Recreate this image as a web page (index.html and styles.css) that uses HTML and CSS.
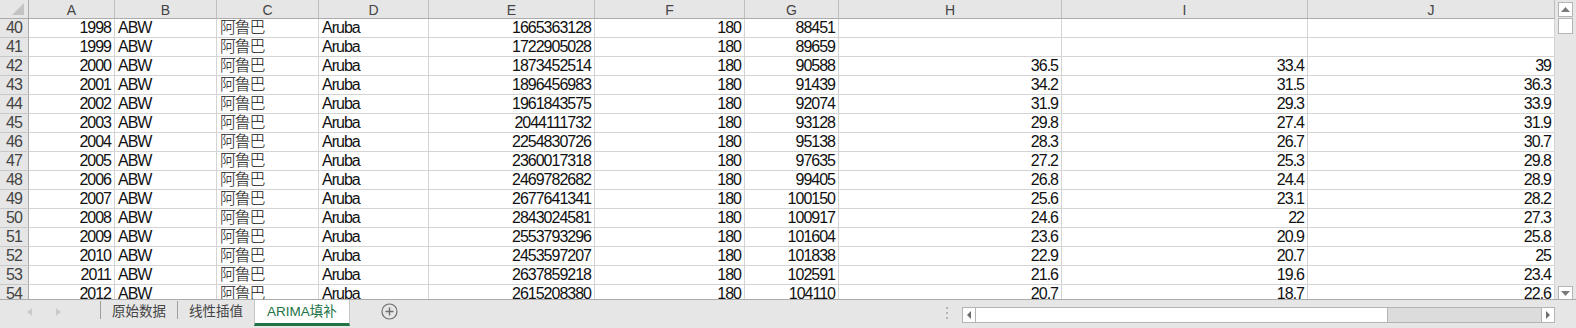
FILE: index.html
```html
<!DOCTYPE html>
<html lang="zh-CN">
<head>
    <meta charset="UTF-8">
    <title>ARIMA填补</title>
    <link rel="stylesheet" href="styles.css">
</head>
<body>
    <div class="app">
        <!-- Sheet grid + vertical scrollbar -->
        <div class="sheet-area">
            <div class="grid" id="grid">
                <div class="cell corner">
                    <svg width="13" height="13" viewBox="0 0 13 13"><polygon points="12,0 12,12 0,12" fill="#c3c3c3"/></svg>
                </div>
            </div>
            <div class="vscroll">
                <div class="sbtn"><svg width="9" height="5" viewBox="0 0 9 5"><polygon points="4.5,0 9,5 0,5" fill="#7a7a7a"/></svg></div>
                <div class="vthumb"></div>
                <div class="sbtn down"><svg width="9" height="5" viewBox="0 0 9 5"><polygon points="0,0 9,0 4.5,5" fill="#7a7a7a"/></svg></div>
            </div>
        </div>

        <!-- Sheet tabs + horizontal scrollbar -->
        <div class="tabbar">
            <div class="tab-nav">
                <svg width="5" height="8" viewBox="0 0 5 8"><polygon points="5,0 5,8 0,4" fill="#cacaca"/></svg>
                <svg width="5" height="8" viewBox="0 0 5 8"><polygon points="0,0 0,8 5,4" fill="#cacaca"/></svg>
            </div>
            <div class="tab-sep"></div>
            <div class="tab">原始数据</div>
            <div class="tab-sep"></div>
            <div class="tab">线性插值</div>
            <div class="tab active">ARIMA填补</div>
            <div class="add-sheet">
                <svg width="17" height="17" viewBox="0 0 17 17">
                    <circle cx="8.5" cy="8.5" r="7.5" fill="none" stroke="#6d6d6d" stroke-width="1.2"/>
                    <path d="M8.5 4.5v8M4.5 8.5h8" stroke="#6d6d6d" stroke-width="1.4"/>
                </svg>
            </div>
            <div class="spacer"></div>
            <div class="dots"><span></span><span></span><span></span></div>
            <div class="hscroll">
                <div class="hbtn"><svg width="4" height="8" viewBox="0 0 4 8"><polygon points="4,0 4,8 0,4" fill="#6d6d6d"/></svg></div>
                <div class="hthumb"></div>
                <div class="spacer"></div>
                <div class="hbtn right"><svg width="4" height="8" viewBox="0 0 4 8"><polygon points="0,0 0,8 4,4" fill="#6d6d6d"/></svg></div>
            </div>
        </div>
    </div>

    <script>
        // Column letters and row data (row number, year, GDP, population, H, I, J)
        const cols = ['A', 'B', 'C', 'D', 'E', 'F', 'G', 'H', 'I', 'J'];
        const rows = [
            [40, 1998, 1665363128, 88451, '', '', ''],
            [41, 1999, 1722905028, 89659, '', '', ''],
            [42, 2000, 1873452514, 90588, 36.5, 33.4, 39],
            [43, 2001, 1896456983, 91439, 34.2, 31.5, 36.3],
            [44, 2002, 1961843575, 92074, 31.9, 29.3, 33.9],
            [45, 2003, 2044111732, 93128, 29.8, 27.4, 31.9],
            [46, 2004, 2254830726, 95138, 28.3, 26.7, 30.7],
            [47, 2005, 2360017318, 97635, 27.2, 25.3, 29.8],
            [48, 2006, 2469782682, 99405, 26.8, 24.4, 28.9],
            [49, 2007, 2677641341, 100150, 25.6, 23.1, 28.2],
            [50, 2008, 2843024581, 100917, 24.6, 22, 27.3],
            [51, 2009, 2553793296, 101604, 23.6, 20.9, 25.8],
            [52, 2010, 2453597207, 101838, 22.9, 20.7, 25],
            [53, 2011, 2637859218, 102591, 21.6, 19.6, 23.4],
            [54, 2012, 2615208380, 104110, 20.7, 18.7, 22.6]
        ];

        const grid = document.getElementById('grid');

        function addCell(text, cls) {
            const cell = document.createElement('div');
            cell.className = 'cell ' + cls;
            cell.textContent = text;
            grid.appendChild(cell);
        }

        cols.forEach(c => addCell(c, 'hd'));

        rows.forEach(r => {
            const [n, year, gdp, pop, h, i, j] = r;
            addCell(n, 'rh');
            addCell(year, 'num');
            addCell('ABW', 'txt');
            addCell('阿鲁巴', 'txt cjk');
            addCell('Aruba', 'txt');
            addCell(gdp, 'num');
            addCell(180, 'num');
            addCell(pop, 'num');
            addCell(h, 'num');
            addCell(i, 'num');
            addCell(j, 'num');
        });
    </script>
</body>
</html>
```

FILE: styles.css
```css
/* Page */
body, html {
    margin: 0;
    padding: 0;
    overflow: hidden;
    background: #e6e6e6;
    font-family: "Liberation Sans", Arial, "Noto Sans CJK SC", sans-serif;
}

.app {
    width: 1576px;
    height: 328px;
    display: flex;
    flex-direction: column;
}

/* Sheet area */
.sheet-area {
    display: flex;
    height: 299px;
    border-bottom: 1px solid #ababab;
    overflow: hidden;
}

.grid {
    display: grid;
    grid-template-columns: 29px 86px 102px 102px 110px 166px 150px 94px 223px 246px 247px;
    grid-auto-rows: 19px;
    width: 1555px;
    height: 299px;
    overflow: hidden;
    background: #fff;
}

.cell {
    box-sizing: border-box;
    height: 19px;
    padding: 0 3px;
    border-right: 1px solid #d4d4d4;
    border-bottom: 1px solid #d4d4d4;
    font-size: 16px;
    letter-spacing: -1px;
    line-height: 18px;
    color: #111;
    white-space: nowrap;
    overflow: hidden;
}
.cell.num { text-align: right; }
.cell.txt { text-align: left; }
.cell.cjk {
    font-weight: 300;
    letter-spacing: -1.2px;
}

/* Column / row headers */
.cell.hd,
.cell.corner {
    background: #e6e6e6;
    border-right-color: #bebebe;
    border-bottom-color: #ababab;
    color: #444;
    text-align: center;
    font-size: 14px;
    letter-spacing: 0;
    line-height: 15px;
    padding-top: 3px;
}
.cell.corner {
    display: flex;
    align-items: flex-end;
    justify-content: flex-end;
    padding: 0 3px 2px 0;
    border-right-color: #ababab;
}
.cell.rh {
    background: #e6e6e6;
    color: #444;
    text-align: center;
    padding: 0;
    border-right-color: #ababab;
    border-bottom-color: #c9c9c9;
}

/* Vertical scrollbar */
.vscroll {
    flex: 1;
    display: flex;
    flex-direction: column;
    align-items: center;
    padding-top: 2px;
    background: #e6e6e6;
}
.sbtn {
    box-sizing: border-box;
    width: 15px;
    height: 15px;
    background: #fff;
    border: 1px solid #b4b4b4;
    display: flex;
    align-items: center;
    justify-content: center;
}
.sbtn.down {
    margin-top: auto;
    height: 13px;
    border-bottom: none;
}
.vthumb {
    box-sizing: border-box;
    width: 15px;
    height: 16px;
    margin-top: 1px;
    background: #fff;
    border: 1px solid #b4b4b4;
}

/* Tab bar */
.tabbar {
    height: 28px;
    display: flex;
    align-items: flex-start;
    background: #e6e6e6;
    font-size: 13.5px;
    color: #444;
}
.tab-nav {
    width: 100px;
    height: 24px;
    display: flex;
    align-items: center;
    gap: 24px;
    padding-left: 27px;
    box-sizing: border-box;
}
.tab-sep {
    width: 1px;
    height: 18px;
    margin-top: 1px;
    background: #9e9e9e;
}
.tab {
    height: 24px;
    line-height: 24px;
    padding: 0 11px;
    white-space: nowrap;
}
.tab.active {
    height: 23px;
    padding: 0 12px;
    background: #fff;
    color: #217346;
    border-left: 1px solid #c6c6c6;
    border-right: 1px solid #c6c6c6;
    border-bottom: 3px solid #217346;
}
.add-sheet {
    margin: 3px 0 0 31px;
    width: 17px;
    height: 17px;
}
.add-sheet svg { display: block; }

.spacer { flex: 1; }

.dots {
    display: flex;
    flex-direction: column;
    gap: 3px;
    margin: 7px 14px 0 0;
}
.dots span {
    width: 2px;
    height: 2px;
    background: #b5b5b5;
}

/* Horizontal scrollbar */
.hscroll {
    box-sizing: border-box;
    width: 593px;
    height: 16px;
    margin: 7px 21px 0 0;
    display: flex;
    background: #dcdcdc;
    border: 1px solid #b4b4b4;
}
.hbtn {
    width: 12px;
    background: #fff;
    border-right: 1px solid #b4b4b4;
    display: flex;
    align-items: center;
    justify-content: center;
}
.hbtn.right {
    border-right: none;
    border-left: 1px solid #b4b4b4;
}
.hthumb {
    width: 411px;
    background: #fff;
    border-right: 1px solid #b4b4b4;
}
```
